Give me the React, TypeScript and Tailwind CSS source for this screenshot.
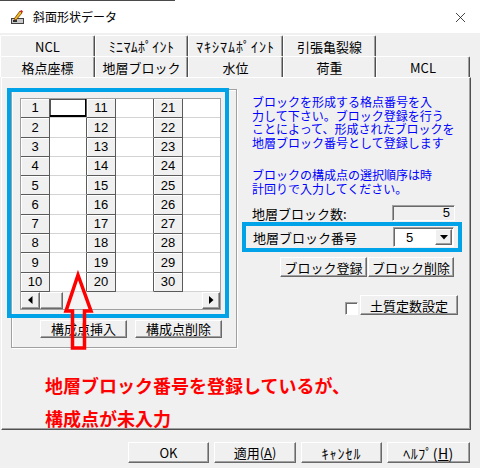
import React from 'react';
import { X } from 'lucide-react';

// classic 3D edges
const raised =
  'bg-[#f0f0f0] border border-t-white border-l-white border-r-[#696969] border-b-[#696969] shadow-[inset_-1px_-1px_0_#a0a0a0]';
const sunken =
  'border border-t-[#a0a0a0] border-l-[#a0a0a0] border-r-white border-b-white shadow-[inset_1px_1px_0_#696969]';

const Btn: React.FC<{ className?: string; children: React.ReactNode }> = ({ className = '', children }) => (
  <div className={`${raised} flex items-center justify-center leading-none text-black ${className}`}>
    {children}
  </div>
);

const Tri: React.FC<{ dir: 'left' | 'right' | 'down' }> = ({ dir }) => {
  if (dir === 'down')
    return (
      <svg width="8" height="5" viewBox="0 0 8 5">
        <path d="M0 0h8L4 4.5z" fill="#000" />
      </svg>
    );
  return (
    <svg width="5" height="8" viewBox="0 0 5 8">
      <path d={dir === 'left' ? 'M4.5 0v8L0 4z' : 'M0 0v8l4.5-4z'} fill="#000" />
    </svg>
  );
};

const inputWidths = ['w-[37px]', 'w-[38px]', 'w-[37px]'];

const PointGrid: React.FC = () => (
  <div className="w-[201px] border border-[#a0a0a0] bg-white">
    {Array.from({ length: 10 }, (_, i) => i + 1).map((r) => (
      <div key={r} className="flex h-[19.3px]">
        {[0, 10, 20].map((off, ci) => (
          <React.Fragment key={off}>
            <div className="w-[29px] flex items-center justify-center bg-[#f0f0f0] border-r border-b border-[#5a5a5a] shadow-[inset_1px_1px_0_#fff] font-['Liberation_Sans',sans-serif] text-[13px]">
              {r + off}
            </div>
            <div
              className={`${inputWidths[ci]} border-b border-[#d4d4d4] ${ci < 2 ? 'border-r border-r-[#5a5a5a]' : ''} ${
                r === 1 && ci === 0 ? 'shadow-[inset_0_-2px_0_#000,inset_-1px_0_0_#000,inset_0_1px_0_#555,inset_1px_0_0_#555]' : ''
              }`}
            />
          </React.Fragment>
        ))}
      </div>
    ))}
    <div className="flex h-[17px] bg-[#f4f4f4]">
      <div className={`${raised} w-[19px] flex items-center justify-center`}>
        <Tri dir="left" />
      </div>
      <div className={`${raised} w-[23px]`} />
      <div className="flex-1" />
      <div className={`${raised} w-[18px] flex items-center justify-center`}>
        <Tri dir="right" />
      </div>
    </div>
  </div>
);

const Tab: React.FC<{ w: string; className?: string; children: React.ReactNode }> = ({ w, className = 'text-[13px]', children }) => (
  <div className={`${w} h-[21px] flex items-center justify-center border-l border-t border-white border-r border-r-[#505050] rounded-t-[2px] shadow-[inset_-1px_0_0_#a0a0a0] leading-none ${className}`}>
    {children}
  </div>
);

export default function App() {
  return (
    <div className="relative w-[480px] h-[468px] overflow-hidden bg-[#f0f0f0] text-black font-['Noto_Sans_CJK_JP',sans-serif]">
      {/* title bar */}
      <div className="h-[33px] bg-white">
        <div className="h-px w-[175px] bg-[#4a4a4a]" />
        <div className="flex items-center h-[32px] pl-[11px] pr-[11px]">
          <svg width="13" height="14" viewBox="0 0 13 14">
            <rect x="0.5" y="8.5" width="12" height="5" fill="#c8c8c8" stroke="#404040" />
            <rect x="2" y="10" width="4" height="2" fill="#303030" />
            <path d="M3 9 L9 1 L11 3 L5 10 Z" fill="#e8c020" stroke="#803000" strokeWidth="0.8" />
            <path d="M9 1 L10.5 0 L12 1.5 L11 3 Z" fill="#d02020" />
          </svg>
          <span className="ml-[9px] text-[12px] leading-none">斜面形状データ</span>
          <X className="ml-auto" size={17} strokeWidth={1.1} color="#111" />
        </div>
      </div>

      {/* tabs */}
      <div className="mt-[2px] flex">
        <Tab w="w-[95px]">NCL</Tab>
        <Tab w="w-[93px]" className="text-[14px] tracking-[0.3px]">ﾐﾆﾏﾑﾎﾟｲﾝﾄ</Tab>
        <Tab w="w-[95px]" className="text-[14px] tracking-[1px]">ﾏｷｼﾏﾑﾎﾟｲﾝﾄ</Tab>
        <Tab w="w-[93px]">引張亀裂線</Tab>
      </div>
      <div className="flex">
        <Tab w="w-[95px]">格点座標</Tab>
        <Tab w="w-[93px]">地層ブロック</Tab>
        <Tab w="w-[95px]">水位</Tab>
        <Tab w="w-[93px]">荷重</Tab>
        <Tab w="w-[94px]">MCL</Tab>
      </div>

      {/* tab panel */}
      <div className="ml-[1px] w-[470px] h-[353px] border border-t-white border-l-white border-r-[#505050] border-b-[#505050] shadow-[inset_-1px_-1px_0_#a0a0a0]">
        <div className="flex items-start">
          {/* left group */}
          <div className="ml-[9px] mt-[11px] w-[226px] border border-[#a0a0a0] shadow-[inset_1px_1px_0_#fff,1px_1px_0_#fff] pl-[8px] pt-[8px] pb-[9px]">
            <PointGrid />
            <div className="mt-[10px] ml-[20px] flex gap-[8px]">
              <Btn className="w-[87px] h-[18px] text-[13px]">構成点挿入</Btn>
              <Btn className="w-[87px] h-[18px] text-[13px]">構成点削除</Btn>
            </div>
          </div>

          {/* right column */}
          <div className="ml-[5px] w-[220px]">
            <p className="mt-[17px] pl-[10px] text-[12px] leading-[13.5px] text-[#0000ff] whitespace-nowrap">
              ブロックを形成する格点番号を入
              <br />
              力して下さい。ブロック登録を行う
              <br />
              ことによって、形成されたブロックを
              <br />
              地層ブロック番号として登録します
            </p>
            <p className="mt-[19px] pl-[10px] text-[12px] leading-[13.5px] text-[#0000ff] whitespace-nowrap">
              ブロックの構成点の選択順序は時
              <br />
              計回りで入力してください。
            </p>

            <div className="mt-[10px] flex items-center h-[16px] pl-[10px]">
              <span className="w-[140px] text-[13px] leading-none">地層ブロック数:</span>
              <div className={`${sunken} w-[63px] h-[16px] bg-[#f0f0f0] flex items-center justify-end pr-[4px] font-['Liberation_Sans',sans-serif] text-[13px]`}>
                5
              </div>
            </div>

            <div className="mt-[1px] h-[30px] border-4 border-[#00a2e8] flex items-center pl-[7px]">
              <span className="w-[140px] text-[13px] leading-none">地層ブロック番号</span>
              <div className={`${sunken} w-[61px] h-[20px] bg-white flex items-center`}>
                <span className="flex-1 pl-[12px] font-['Liberation_Sans',sans-serif] text-[13px] leading-none">5</span>
                <div className={`${raised} w-[17px] h-[16px] mr-[1px] flex items-center justify-center`}>
                  <Tri dir="down" />
                </div>
              </div>
            </div>

            <div className="mt-[5px] ml-[38px] flex gap-[1px]">
              <Btn className="w-[87px] h-[20px] text-[13px]">ブロック登録</Btn>
              <Btn className="w-[86px] h-[20px] text-[13px]">ブロック削除</Btn>
            </div>

            <div className="mt-[18px] ml-[103px] flex items-end gap-[2px]">
              <div className={`${sunken} w-[13px] h-[13px] bg-white`} />
              <Btn className="w-[98px] h-[20px] text-[13px]">土質定数設定</Btn>
            </div>
          </div>
        </div>

        <div className="mt-[21px] ml-[43px] text-[18px] leading-[33px] font-bold text-[#ff0000] whitespace-nowrap">
          地層ブロック番号を登録しているが、
          <br />
          構成点が未入力
        </div>
      </div>

      {/* dialog buttons */}
      <div className="mt-[12px] flex justify-end pr-[10px] gap-[5px]">
        <Btn className="w-[81px] h-[21px] text-[13px]">OK</Btn>
        <Btn className="w-[82px] h-[21px] text-[13px]">
          適用(<span className="underline">A</span>)
        </Btn>
        <Btn className="w-[81px] h-[21px] text-[14px] tracking-[1px]">ｷｬﾝｾﾙ</Btn>
        <Btn className="w-[83px] h-[21px] text-[14px] tracking-[0.5px]">
          ﾍﾙﾌﾟ(<span className="underline">H</span>)
        </Btn>
      </div>

      {/* annotation overlays */}
      <div className="absolute left-[7px] top-[88px] w-[222px] h-[230px] border-4 border-[#00a2e8] pointer-events-none" />
      <svg className="absolute left-[60px] top-[268px]" width="40" height="86" viewBox="60 268 40 86">
        <path
          d="M78 275 L91 311 L84.5 311 L84.5 348 L72.5 348 L72.5 311 L66 311 Z"
          fill="none"
          stroke="#ff0000"
          strokeWidth="3.5"
          strokeLinejoin="miter"
        />
      </svg>
    </div>
  );
}
